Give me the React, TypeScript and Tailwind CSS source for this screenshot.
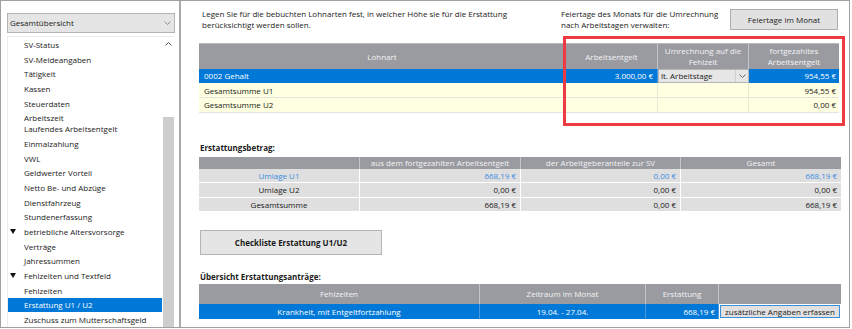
import clsx from 'clsx';

type NavItem = { label: string; second?: string; group?: boolean; selected?: boolean };

const NAV: NavItem[] = [
  { label: 'SV-Status' },
  { label: 'SV-Meldeangaben' },
  { label: 'Tätigkeit' },
  { label: 'Kassen' },
  { label: 'Steuerdaten' },
  { label: 'Arbeitszeit', second: 'Laufendes Arbeitsentgelt' },
  { label: 'Einmalzahlung' },
  { label: 'VWL' },
  { label: 'Geldwerter Vorteil' },
  { label: 'Netto Be- und Abzüge' },
  { label: 'Dienstfahrzeug' },
  { label: 'Stundenerfassung' },
  { label: 'betriebliche Altersvorsorge', group: true },
  { label: 'Verträge' },
  { label: 'Jahressummen' },
  { label: 'Fehlzeiten und Textfeld', group: true },
  { label: 'Fehlzeiten' },
  { label: 'Erstattung U1 / U2', selected: true },
  { label: 'Zuschuss zum Mutterschaftsgeld' },
];

const BETRAG = [
  { label: 'Umlage U1', a: '668,19 €', b: '0,00 €', c: '668,19 €', blue: true },
  { label: 'Umlage U2', a: '0,00 €', b: '0,00 €', c: '0,00 €' },
  { label: 'Gesamtsumme', a: '668,19 €', b: '0,00 €', c: '668,19 €' },
];

function Chevron({ up = false, color = '#777' }: { up?: boolean; color?: string }) {
  return (
    <svg width="7" height="4" viewBox="0 0 7 4" className="block">
      <polyline
        points={up ? '0.5,3.5 3.5,0.5 6.5,3.5' : '0.5,0.5 3.5,3.5 6.5,0.5'}
        fill="none"
        stroke={color}
        strokeWidth="1"
      />
    </svg>
  );
}

function Triangle() {
  return (
    <svg width="6" height="5" viewBox="0 0 6 5" className="block">
      <polygon points="0,0 6,0 3,5" fill="#111" />
    </svg>
  );
}

const HEAD = 'bg-[#9a9ba1] text-[#f3f3f3] flex items-center justify-center text-center border-r border-[#c4c4c9]';

export default function App() {
  return (
    <div className="relative w-[852px] h-[329px] bg-white text-[8px] leading-[11px] text-[#1a1a1a] font-['Open_Sans',sans-serif]">
      <div className="w-[850px] h-[328px] border border-[#a0a0a0] flex">
        {/* sidebar */}
        <aside className="w-[180px] border-r-2 border-[#a9a9a9] flex flex-col">
          <div className="mt-[12px] ml-[6px] w-[168px] h-[20px] bg-[#e5e5e5] border border-[#b3b3b3] flex items-center justify-between pl-[2px] pr-[3px]">
            <span>Gesamtübersicht</span>
            <Chevron color="#8a8a8a" />
          </div>
          <div className="mt-[3.7px] ml-[6px] w-[168px] flex-1 flex border-l border-t border-[#ececec]">
            <div className="w-[155px] flex flex-col">
              {NAV.map((item) => (
                <div
                  key={item.label}
                  className={clsx(
                    'flex items-center pl-[2px] whitespace-nowrap',
                    item.second ? 'h-[25.4px]' : 'h-[14.7px]',
                    item.selected && 'bg-[#0078d7] text-white',
                  )}
                >
                  <span className="w-[14px] flex items-center">{item.group && <Triangle />}</span>
                  {item.second ? (
                    <span>
                      {item.label}
                      <br />
                      {item.second}
                    </span>
                  ) : (
                    item.label
                  )}
                </div>
              ))}
            </div>
            <div className="w-[13px] flex flex-col items-center">
              <div className="h-[13px] flex items-center justify-center">
                <Chevron up color="#555" />
              </div>
              <div className="mt-[67px] w-[11px] flex-1 bg-[#cdcdcd]" />
            </div>
          </div>
        </aside>

        {/* main */}
        <main className="flex-1 pl-[18px] flex flex-col">
          <div className="flex h-[42px]">
            <p className="w-[362px] pl-[3px] pt-[6.5px] whitespace-nowrap">
              Legen Sie für die bebuchten Lohnarten fest, in welcher Höhe sie für die Erstattung
              <br />
              berücksichtigt werden sollen.
            </p>
            <p className="w-[169px] pt-[6.5px] whitespace-nowrap">
              Feiertage des Monats für die Umrechnung
              <br />
              nach Arbeitstagen verwalten:
            </p>
            <button className="mt-[8px] w-[108px] h-[21px] bg-[#e1e1e1] border border-[#adadad] flex items-center justify-center">
              Feiertage im Monat
            </button>
          </div>

          {/* Lohnarten */}
          <div className="w-[640px]">
            <div className="grid grid-cols-[367px_92px_91px_90px] h-[25.5px] border-t border-[#b9b9be]">
              <div className={HEAD}>Lohnart</div>
              <div className={HEAD}>Arbeitsentgelt</div>
              <div className={HEAD}>
                Umrechnung auf die
                <br />
                Fehlzeit
              </div>
              <div className={clsx(HEAD, 'border-r-0')}>
                fortgezahltes
                <br />
                Arbeitsentgelt
              </div>
            </div>
            <div className="grid grid-cols-[367px_92px_91px_90px] h-[14.7px] bg-[#0078d7] text-white">
              <div className="flex items-center pl-[5px] border-r border-[#4a98de]">0002 Gehalt</div>
              <div className="flex items-center justify-end pr-[4px] border-r border-[#4a98de]">3.000,00 €</div>
              <div className="flex items-center bg-[#e6e6e6] border border-[#b5b5b5] text-[#1a1a1a]">
                <span className="flex-1 pl-[2px]">lt. Arbeitstage</span>
                <span className="w-[13px] h-full border-l border-[#cfcfcf] flex items-center justify-center">
                  <Chevron color="#666" />
                </span>
              </div>
              <div className="flex items-center justify-end pr-[3px]">954,55 €</div>
            </div>
            {[
              ['Gesamtsumme U1', '954,55 €'],
              ['Gesamtsumme U2', '0,00 €'],
            ].map(([label, value]) => (
              <div
                key={label}
                className="grid grid-cols-[367px_92px_91px_90px] h-[14.7px] bg-[#ffffe1] border-b border-[#e4e4dc]"
              >
                <div className="flex items-center pl-[5px] border-r border-[#e9e9d8]">{label}</div>
                <div className="border-r border-[#e9e9d8]" />
                <div className="border-r border-[#e9e9d8]" />
                <div className="flex items-center justify-end pr-[3px]">{value}</div>
              </div>
            ))}
          </div>

          {/* Erstattungsbetrag */}
          <h3 className="mt-[29.5px] pl-[1px] font-bold">Erstattungsbetrag:</h3>
          <div className="mt-[3.5px] w-[642px]">
            <div className="grid grid-cols-[161px_161px_160px_160px] h-[12px]">
              <div className={HEAD} />
              <div className={HEAD}>aus dem fortgezahlten Arbeitsentgelt</div>
              <div className={HEAD}>der Arbeitgeberanteile zur SV</div>
              <div className={clsx(HEAD, 'border-r-0')}>Gesamt</div>
            </div>
            {BETRAG.map((row) => (
              <div
                key={row.label}
                className={clsx(
                  'grid grid-cols-[161px_161px_160px_160px] h-[14.5px] bg-[#dfdfdf]',
                  row.blue ? 'text-[#3a8ee0]' : 'text-[#1a1a1a]',
                )}
              >
                <div className="flex items-center justify-center border-r border-b border-white">{row.label}</div>
                <div className="flex items-center justify-end pr-[4px] border-r border-b border-white">{row.a}</div>
                <div className="flex items-center justify-end pr-[4px] border-r border-b border-white">{row.b}</div>
                <div className="flex items-center justify-end pr-[4px] border-b border-white">{row.c}</div>
              </div>
            ))}
          </div>

          <button className="mt-[17.5px] ml-[1px] w-[182px] h-[25px] bg-[#e5e5e5] border border-[#b4b4b4] font-bold flex items-center justify-center">
            Checkliste Erstattung U1/U2
          </button>

          {/* Übersicht */}
          <h3 className="mt-[16.5px] pl-[1px] font-bold">Übersicht Erstattungsanträge:</h3>
          <div className="mt-[1.5px] w-[642px]">
            <div className="grid grid-cols-[281px_166px_73px_122px] h-[20px]">
              <div className={HEAD}>Fehlzeiten</div>
              <div className={HEAD}>Zeitraum im Monat</div>
              <div className={HEAD}>Erstattung</div>
              <div className={clsx(HEAD, 'border-r-0')} />
            </div>
            <div className="grid grid-cols-[281px_166px_73px_122px] h-[15px] bg-[#0078d7] text-white">
              <div className="flex items-center justify-center border-r border-[#4a98de]">
                Krankheit, mit Entgeltfortzahlung
              </div>
              <div className="flex items-center justify-center border-r border-[#4a98de]">19.04. - 27.04.</div>
              <div className="flex items-center justify-end pr-[3px] border-r border-[#4a98de]">668,19 €</div>
              <div className="flex items-center bg-white px-[1px] py-[1px]">
                <button className="w-full h-full bg-[#e1e1e1] border border-[#3a8fdc] text-[#1a1a1a] flex items-center pl-[4px]">
                  zusätzliche Angaben erfassen
                </button>
              </div>
            </div>
          </div>
        </main>
      </div>

      {/* highlight box */}
      <div className="absolute left-[563px] top-[36px] w-[282px] h-[90px] border-[3px] border-[#ee3a43]" />
    </div>
  );
}
